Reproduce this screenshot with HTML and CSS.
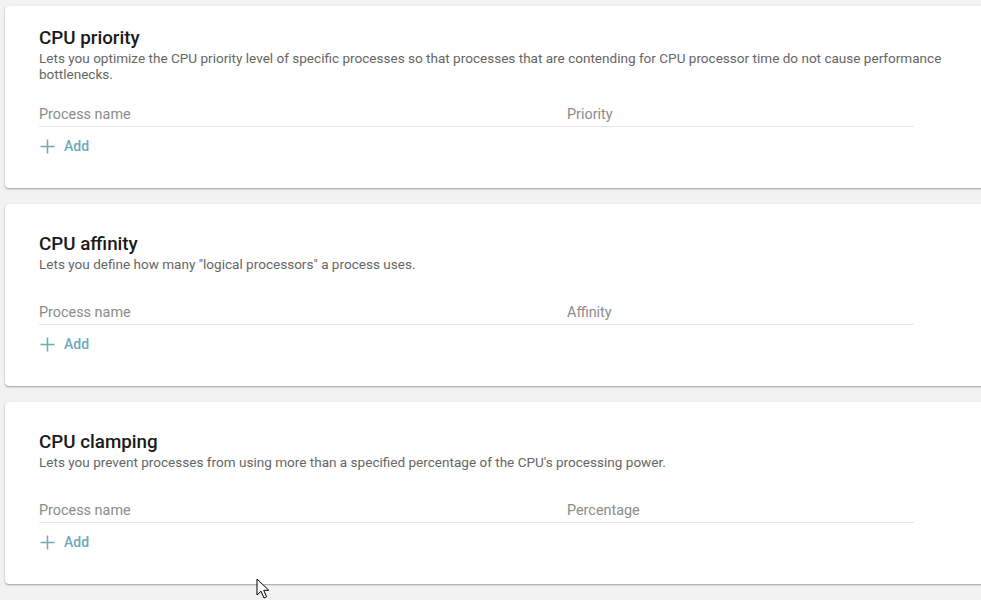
FILE: index.html
```html
<!DOCTYPE html>
<html>
<head>
<meta charset="utf-8">
<link rel="stylesheet" href="styles.css">
</head>
<body>
<div class="page">
  <section class="card">
    <div class="card-head">
      <h2 class="title">CPU priority</h2>
      <p class="desc">Lets you optimize the CPU priority level of specific processes so that processes that are contending for CPU processor time do not cause performance bottlenecks.</p>
    </div>
    <div class="table">
      <div class="thead"><span class="col-name">Process name</span><span class="col-val">Priority</span></div>
      <button class="add"><svg class="plus" width="15" height="15" viewBox="0 0 15 15"><path d="M7.5 0.5v14M0.5 7.5h14" stroke="currentColor" stroke-width="1.5" fill="none"/></svg><span>Add</span></button>
    </div>
  </section>
  <section class="card">
    <div class="card-head">
      <h2 class="title">CPU affinity</h2>
      <p class="desc">Lets you define how many "logical processors" a process uses.</p>
    </div>
    <div class="table">
      <div class="thead"><span class="col-name">Process name</span><span class="col-val">Affinity</span></div>
      <button class="add"><svg class="plus" width="15" height="15" viewBox="0 0 15 15"><path d="M7.5 0.5v14M0.5 7.5h14" stroke="currentColor" stroke-width="1.5" fill="none"/></svg><span>Add</span></button>
    </div>
  </section>
  <section class="card">
    <div class="card-head">
      <h2 class="title">CPU clamping</h2>
      <p class="desc">Lets you prevent processes from using more than a specified percentage of the CPU's processing power.</p>
    </div>
    <div class="table">
      <div class="thead"><span class="col-name">Process name</span><span class="col-val">Percentage</span></div>
      <button class="add"><svg class="plus" width="15" height="15" viewBox="0 0 15 15"><path d="M7.5 0.5v14M0.5 7.5h14" stroke="currentColor" stroke-width="1.5" fill="none"/></svg><span>Add</span></button>
    </div>
  </section>
</div>
<svg class="cursor" width="14" height="22" viewBox="0 0 14 22"><path d="M1 1 L1 17 L5 13.2 L8 20 L10.6 18.8 L7.7 12.3 L12.8 12.3 Z" fill="#fff" stroke="#000" stroke-width="1" stroke-linejoin="round"/></svg>
</body>
</html>
```
FILE: styles.css
```css
html, body {
  margin: 0;
  padding: 0;
  background: #f2f2f2;
  overflow: hidden;
  height: 600px;
}
body {
  font-family: Roboto, "Liberation Sans", sans-serif;
  position: relative;
}
.page {
  display: flex;
  flex-direction: column;
  gap: 16px;
  padding: 6px 0 0 5px;
  width: 1000px;
}
.card {
  background: #fff;
  height: 182px;
  border-radius: 4px;
  box-shadow: 0 1px 2px rgba(0,0,0,0.35), 0 0 1px rgba(0,0,0,0.08);
  padding: 0 0 0 34px;
  box-sizing: border-box;
}
.card-head {
  height: 96px;
  display: flex;
  flex-direction: column;
  justify-content: center;
}
.title {
  margin: 0;
  font-size: 18.8px;
  line-height: 22px;
  font-weight: 500;
  color: #1a1a1a;
}
.desc {
  margin: 1px 0 0;
  font-size: 13.55px;
  line-height: 16px;
  color: #666;
  max-width: 915px;
}
.table {
  width: 875px;
}
.thead {
  display: flex;
  padding: 3px 0 1px;
  border-bottom: 1px solid #e6e6e6;
  font-size: 14.4px;
  line-height: 20px;
  color: #8c8c8c;
}
.col-name {
  width: 528px;
}
.add {
  margin-top: 9px;
  display: flex;
  align-items: center;
  gap: 9px;
  background: none;
  border: 0;
  padding: 0 0 0 1px;
  font-family: inherit;
  font-size: 14px;
  line-height: 20px;
  font-weight: 500;
  color: #6aaabb;
  cursor: pointer;
}
.plus {
  display: block;
}
.cursor {
  position: absolute;
  left: 256px;
  top: 578px;
}
```
